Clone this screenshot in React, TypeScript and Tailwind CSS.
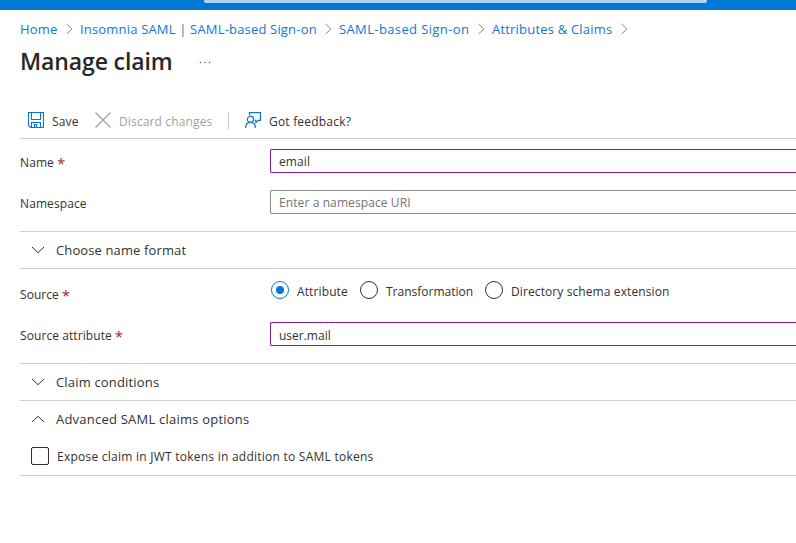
import type { ReactNode } from "react";

function Crumb({ children, className }: { children: ReactNode; className: string }) {
  return (
    <>
      <a className={`relative top-px block shrink-0 text-[#0f78d1] ${className}`}>{children}</a>
      <svg width="7" height="12" viewBox="0 0 7 12" fill="none" stroke="#8a8886" className="mr-[7px] shrink-0">
        <path d="M0.7 1 L5.9 6 L0.7 11" />
      </svg>
    </>
  );
}

function Chevron({ up = false }: { up?: boolean }) {
  return (
    <svg width="14" height="8" viewBox="0 0 14 8" fill="none" stroke="#323130" strokeWidth="1" className="ml-[11px] mr-[11px] shrink-0">
      <path d={up ? "M1 7 L7 1.3 L13 7" : "M1 1 L7 6.7 L13 1"} />
    </svg>
  );
}

function Section({ label, up, className }: { label: string; up?: boolean; className: string }) {
  return (
    <div className="flex h-[37px] items-center border-t border-[#d2d0ce]">
      <Chevron up={up} />
      <span className={`relative top-px text-[13px] ${className}`}>{label}</span>
    </div>
  );
}

function Label({ text, className, required }: { text: string; className: string; required?: boolean }) {
  return (
    <div className="flex w-[250px] shrink-0 pt-[2px] text-[12px] leading-6">
      <span className={className}>{text}</span>
      {required && <span className="ml-[3px] text-[15px] leading-6 text-[#a4262c]">*</span>}
    </div>
  );
}

function Radio({ label, checked, className }: { label: string; checked?: boolean; className: string }) {
  return (
    <div className={`flex shrink-0 items-center ${className}`}>
      <span className={`mr-[8px] flex size-[18px] shrink-0 items-center justify-center rounded-full border ${checked ? "border-[#0078d4]" : "border-[#323130]"}`}>
        {checked && <span className="size-[8px] rounded-full bg-[#0078d4]" />}
      </span>
      <span className="relative top-[2px]">{label}</span>
    </div>
  );
}

export default function App() {
  return (
    <div className="h-[543px] w-[796px] overflow-hidden whitespace-nowrap bg-white font-['Open_Sans','Noto_Sans',sans-serif] text-[12px] text-[#323130]">
      <header className="h-[10px] bg-[#0078d4] pl-[204px]">
        <div className="h-[3px] w-[503px] rounded-b-[2px] bg-[#b0d5f2]" />
      </header>
      <nav className="flex h-[38px] items-center pl-[20px] text-[13px]">
        <Crumb className="w-[46px] tracking-[0.2px]">Home</Crumb>
        <Crumb className="w-[245px] tracking-[0.18px]">Insomnia SAML | SAML-based Sign-on</Crumb>
        <Crumb className="w-[139px] tracking-[0.38px]">SAML-based Sign-on</Crumb>
        <Crumb className="w-[129px] tracking-[0.2px]">Attributes &amp; Claims</Crumb>
      </nav>
      <div className="flex h-[28px] items-center pl-[20px]">
        <h1 className="relative -top-px w-[179px] text-[23px] font-semibold leading-7 tracking-[-0.12px] text-[#292827]">Manage claim</h1>
        <svg width="13" height="3" viewBox="0 0 13 3" fill="#605e5c">
          <circle cx="1.5" cy="1.5" r="0.8" />
          <circle cx="6" cy="1.5" r="0.8" />
          <circle cx="10.5" cy="1.5" r="0.8" />
        </svg>
      </div>
      <main className="pl-[20px]">
        <div className="mt-[26px] flex h-[37px] items-center border-b border-[#d2d0ce] pl-[8px]">
          <svg width="16" height="16" viewBox="0 0 16 16" fill="none" stroke="#0078d4" strokeWidth="1.1" className="mr-[8px] shrink-0">
            <path d="M.5.5h15v15H2.5l-2-2zM3.5.5v7h9v-7M3.5 15.5v-5h9v5M6.5 15.5v-3h2v3" />
          </svg>
          <span className="relative top-[2px] w-[43px] tracking-[0.15px]">Save</span>
          <svg width="16" height="16" viewBox="0 0 16 16" stroke="#a19f9d" strokeWidth="1.2" className="mr-[8px] shrink-0">
            <path d="M.5.5l15 15M15.5.5l-15 15" />
          </svg>
          <span className="relative top-[2px] w-[109px] tracking-[0.14px] text-[#a19f9d]">Discard changes</span>
          <span className="mr-[16px] h-[17px] w-px bg-[#c8c6c4]" />
          <svg width="16" height="16" viewBox="0 0 16 16" fill="none" stroke="#0078d4" strokeWidth="1.2" className="mr-[8px] shrink-0">
            <path d="M4.4 3V.6h11v7.8h-2.1l-2.4 2.1V8.4H9.8" />
            <circle cx="5.5" cy="7.3" r="3.1" />
            <path d="M.6 16c0-3.3 2-5.6 4.9-5.6s4.9 2.3 4.9 5.6" />
          </svg>
          <span className="relative top-[2px] tracking-[0.2px]">Got feedback?</span>
        </div>
        <div className="mt-[10px] flex h-[24px]">
          <Label text="Name" className="tracking-[0.1px]" required />
          <div className="h-6 flex-1 rounded-l-[2px] border border-r-0 border-[#881798] pl-[8px] leading-[23px] tracking-[0.1px]">email</div>
        </div>
        <div className="mt-[17px] flex h-[24px]">
          <Label text="Namespace" className="tracking-[0.1px]" />
          <div className="h-6 flex-1 rounded-l-[2px] border border-r-0 border-[#8a8886] pl-[8px] leading-[23px] tracking-[0.1px] text-[#757371]">Enter a namespace URI</div>
        </div>
        <div className="mt-[17px] border-b border-[#d2d0ce]">
          <Section label="Choose name format" className="tracking-[0.12px]" />
        </div>
        <div className="mt-[12px] flex h-[24px]">
          <Label text="Source" className="tracking-[0.05px]" required />
          <div className="flex h-[18px] pl-px">
            <Radio label="Attribute" checked className="w-[89px] tracking-[0.12px]" />
            <Radio label="Transformation" className="w-[125px]" />
            <Radio label="Directory schema extension" className="tracking-[0.1px]" />
          </div>
        </div>
        <div className="mt-[17px] flex h-[24px]">
          <Label text="Source attribute" className="tracking-[0.08px]" required />
          <div className="h-6 flex-1 rounded-l-[2px] border border-r-0 border-[#881798] pl-[8px] leading-[25px]">user.mail</div>
        </div>
        <div className="mt-[17px] border-b border-[#d2d0ce]">
          <Section label="Claim conditions" className="tracking-[0.17px]" />
          <Section label="Advanced SAML claims options" up className="tracking-[0.22px]" />
          <label className="flex h-[38px] items-center pl-[11px]">
            <span className="mr-[8px] size-[18px] rounded-[2px] border border-[#323130]" />
            <span className="relative top-px tracking-[0.245px]">Expose claim in JWT tokens in addition to SAML tokens</span>
          </label>
        </div>
      </main>
    </div>
  );
}
